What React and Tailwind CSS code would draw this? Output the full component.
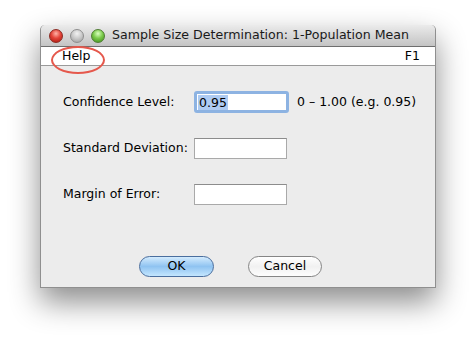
import React from 'react';

const font = { fontFamily: '"Lucida Grande", "DejaVu Sans", sans-serif' };

const TrafficLight = ({ color }) => {
  const styles = {
    red: 'bg-[radial-gradient(circle_at_50%_30%,#ffb3a8_0%,#e4453a_45%,#a8140c_100%)] border-[#8c2a22]',
    gray: 'bg-[radial-gradient(circle_at_50%_30%,#f2f2f2_0%,#c8c8c8_50%,#9a9a9a_100%)] border-[#8e8e8e]',
    green: 'bg-[radial-gradient(circle_at_50%_30%,#d9ffc0_0%,#7ccb4c_45%,#3b8a18_100%)] border-[#4f7d33]',
  };
  return <div className={`w-[14px] h-[14px] rounded-full border ${styles[color]}`} />;
};

const Field = ({ value, focused }) => {
  if (focused) {
    return (
      <div className="w-[95px] h-[22px] rounded-[3px] border-[3px] border-[#8db3e2] bg-white flex items-center pl-[1px]">
        <span className="bg-[#aecbf2] text-[12.5px] leading-[15px] text-black px-[1px]">{value}</span>
      </div>
    );
  }
  return <div className="w-[93px] h-[21px] border border-[#a9a9a9] border-t-[#8c8c8c] bg-white" />;
};

const Row = ({ label, children }) => (
  <div className="flex items-center h-[22px]">
    <div className="w-[131px] text-[12.5px] text-black">{label}</div>
    {children}
  </div>
);

export default function App() {
  return (
    <div className="w-[476px] h-[343px] bg-white overflow-hidden pt-[25px]" style={font}>
      <div className="ml-[40px] w-[396px] h-[263px] flex flex-col rounded-t-[5px] bg-[#ececec] border border-[#8f8f8f] border-t-0 shadow-[0_14px_30px_rgba(0,0,0,0.45)]">
        {/* title bar */}
        <div className="h-[22px] rounded-t-[5px] bg-gradient-to-b from-[#ebebeb] to-[#c4c4c4] border-b border-[#6e6e6e] flex items-center pl-[8px]">
          <div className="flex gap-[7px]">
            <TrafficLight color="red" />
            <TrafficLight color="gray" />
            <TrafficLight color="green" />
          </div>
          <div className="ml-[7px] text-[12.6px] text-[#1a1a1a]">Sample Size Determination: 1-Population Mean</div>
        </div>
        {/* menu bar */}
        <div className="relative h-[19px] bg-white border-b border-[#9a9a9a] flex items-center justify-between pl-[21px] pr-[15px] text-[12.5px] text-black">
          <span>Help</span>
          <span>F1</span>
          <div className="absolute left-[10px] top-[-1px] w-[54px] h-[28px] rounded-[50%] border-2 border-[#e5584c]" />
        </div>
        {/* form */}
        <div className="flex flex-col gap-[24px] pt-[25px] pl-[22px]">
          <Row label="Confidence Level:">
            <Field value="0.95" focused />
            <span className="ml-[8px] text-[12.5px] text-black">0 – 1.00 (e.g. 0.95)</span>
          </Row>
          <Row label="Standard Deviation:">
            <Field />
          </Row>
          <Row label="Margin of Error:">
            <Field />
          </Row>
        </div>
        <div className="flex gap-[34px] pl-[98px] mt-[51px]">
          <button className="w-[75px] h-[21px] rounded-full border border-[#4a6e9e] bg-gradient-to-b from-[#d3ebfd] via-[#8fc3f1] to-[#c4e6fe] text-[12.5px] text-black">
            OK
          </button>
          <button className="w-[74px] h-[21px] rounded-full border border-[#858585] bg-gradient-to-b from-white via-[#f1f1f1] to-[#fdfdfd] text-[12.5px] text-black">
            Cancel
          </button>
        </div>
      </div>
    </div>
  );
}
